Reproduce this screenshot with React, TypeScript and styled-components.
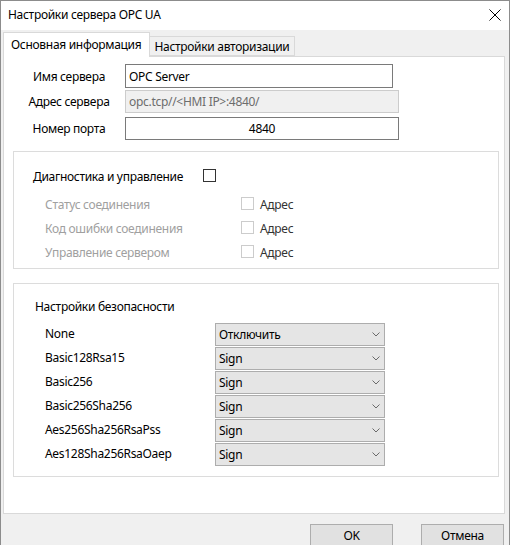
import React from "react";
import styled, { createGlobalStyle } from "styled-components";

const GlobalStyle = createGlobalStyle`
	html, body {
		margin: 0;
		padding: 0;
		background: #ffffff;
	}
	body {
		font-family: "Noto Sans", "Open Sans", "DejaVu Sans", sans-serif;
		font-size: 12px;
		letter-spacing: -0.3px;
		color: #000;
	}
`;

const diagRows = ["Статус соединения", "Код ошибки соединения", "Управление сервером"];

const securityRows = [
	{ name: "None", mode: "Отключить" },
	{ name: "Basic128Rsa15", mode: "Sign" },
	{ name: "Basic256", mode: "Sign" },
	{ name: "Basic256Sha256", mode: "Sign" },
	{ name: "Aes256Sha256RsaPss", mode: "Sign" },
	{ name: "Aes128Sha256RsaOaep", mode: "Sign" },
];

export default function App() {
	return (
		<>
			<GlobalStyle />
			<Window>
				<TitleBar>
					<Title>Настройки сервера OPC UA</Title>
					<CloseButton>
						<svg width="12" height="12" viewBox="0 0 12 12">
							<path d="M0.5 0.5 L11.5 11.5 M11.5 0.5 L0.5 11.5" stroke="#000" strokeWidth="1" />
						</svg>
					</CloseButton>
				</TitleBar>
				<Body>
					<TabStrip>
						<Tab $active>Основная информация</Tab>
						<Tab>Настройки авторизации</Tab>
					</TabStrip>
					<Panel>
						<FormRow>
							<FieldLabel>Имя сервера</FieldLabel>
							<TextBox $width={268} $height={24} readOnly value="OPC Server" />
						</FormRow>
						<FormRow $top={2}>
							<FieldLabel>Адрес сервера</FieldLabel>
							<TextBox $width={274} $height={23} $disabled readOnly value="opc.tcp//<HMI IP>:4840/" />
						</FormRow>
						<FormRow $top={4}>
							<FieldLabel>Номер порта</FieldLabel>
							<TextBox $width={274} $height={23} $center readOnly value="4840" />
						</FormRow>

						<Group $top={11} $height={118}>
							<GroupHeader $top={14} $pad={19}>
								<HeaderText $width={170}>Диагностика и управление</HeaderText>
								<CheckBox />
							</GroupHeader>
							<DiagList>
								{diagRows.map((label) => (
									<DiagRow key={label}>
										<DisabledText>{label}</DisabledText>
										<CheckBox $disabled />
										<AddrText>Адрес</AddrText>
									</DiagRow>
								))}
							</DiagList>
						</Group>

						<Group $top={14} $height={194}>
							<GroupHeader $top={12} $pad={21}>
								<HeaderText>Настройки безопасности</HeaderText>
							</GroupHeader>
							<SecurityList>
								{securityRows.map((row) => (
									<SecurityRow key={row.name}>
										<PolicyName>{row.name}</PolicyName>
										<Select>
											<span>{row.mode}</span>
											<svg width="8" height="5" viewBox="0 0 8 5">
												<path d="M0.5 0.5 L4 4 L7.5 0.5" stroke="#6a6a6a" strokeWidth="1" fill="none" />
											</svg>
										</Select>
									</SecurityRow>
								))}
							</SecurityList>
						</Group>
					</Panel>
					<Footer>
						<Button>OK</Button>
						<Button>Отмена</Button>
					</Footer>
				</Body>
			</Window>
		</>
	);
}

const Window = styled.div`
	width: 510px;
	height: 545px;
	box-sizing: border-box;
	border: 1px solid #8c8c8c;
	border-bottom: none;
	display: flex;
	flex-direction: column;
	overflow: hidden;
	background: #f0f0f0;
`;

const TitleBar = styled.div`
	height: 29px;
	flex-shrink: 0;
	background: #ffffff;
	display: flex;
	align-items: center;
	justify-content: space-between;
	padding: 0 8px 0 7px;
`;

const Title = styled.span`
	font-size: 12px;
	line-height: 16px;
	margin-top: -1px;
`;

const CloseButton = styled.div`
	width: 12px;
	height: 12px;
	display: flex;
	margin-top: -2px;
`;

const Body = styled.div`
	flex: 1;
	display: flex;
	flex-direction: column;
	padding: 2px 4px 0 2px;
`;

const TabStrip = styled.div`
	height: 24px;
	display: flex;
	align-items: flex-end;
	position: relative;
	z-index: 1;
`;

const Tab = styled.div<{ $active?: boolean }>`
	box-sizing: border-box;
	height: ${(p) => (p.$active ? 25 : 20)}px;
	margin-bottom: ${(p) => (p.$active ? -1 : 0)}px;
	padding: ${(p) => (p.$active ? "0 8px 2px 7px" : "0 5px 0 4px")};
	display: flex;
	align-items: center;
	border: 1px solid #d9d9d9;
	border-bottom: ${(p) => (p.$active ? "none" : "1px solid #d9d9d9")};
	border-left: ${(p) => (p.$active ? "1px solid #d9d9d9" : "none")};
	background: ${(p) => (p.$active ? "#ffffff" : "#f0f0f0")};
	white-space: nowrap;
`;

const Panel = styled.div`
	box-sizing: border-box;
	height: 458px;
	border: 1px solid #d9d9d9;
	background: #ffffff;
	padding-top: 7px;
`;

const FormRow = styled.div<{ $top?: number }>`
	display: flex;
	align-items: center;
	margin-top: ${(p) => p.$top ?? 0}px;
	padding-left: 11px;
`;

const FieldLabel = styled.div`
	width: 108px;
	margin-right: 2px;
	text-align: center;
	white-space: nowrap;
`;

const TextBox = styled.input<{ $width: number; $height: number; $disabled?: boolean; $center?: boolean }>`
	box-sizing: border-box;
	width: ${(p) => p.$width}px;
	height: ${(p) => p.$height}px;
	margin: 0;
	padding: 0 3px;
	font: inherit;
	letter-spacing: inherit;
	outline: none;
	text-align: ${(p) => (p.$center ? "center" : "left")};
	border: 1px solid ${(p) => (p.$disabled ? "#cccccc" : "#7a7a7a")};
	background: ${(p) => (p.$disabled ? "#f0f0f0" : "#ffffff")};
	color: ${(p) => (p.$disabled ? "#6d6d6d" : "#000000")};
`;

const Group = styled.div<{ $top: number; $height: number }>`
	box-sizing: border-box;
	height: ${(p) => p.$height}px;
	margin: ${(p) => p.$top}px 5px 0 9px;
	border: 1px solid #dcdcdc;
`;

const GroupHeader = styled.div<{ $top: number; $pad: number }>`
	display: flex;
	align-items: center;
	height: 20px;
	margin-top: ${(p) => p.$top}px;
	padding-left: ${(p) => p.$pad}px;
`;

const HeaderText = styled.div<{ $width?: number }>`
	width: ${(p) => (p.$width ? `${p.$width}px` : "auto")};
	white-space: nowrap;
`;

const CheckBox = styled.span<{ $disabled?: boolean }>`
	box-sizing: border-box;
	display: inline-block;
	width: 13px;
	height: 13px;
	background: #ffffff;
	border: 1px solid ${(p) => (p.$disabled ? "#cccccc" : "#333333")};
	margin-top: -2px;
`;

const DiagList = styled.div`
	margin-top: 6px;
	padding-left: 31px;
`;

const DiagRow = styled.div`
	display: grid;
	grid-template-columns: 196px 13px auto;
	align-items: center;
	height: 24px;
`;

const DisabledText = styled.span`
	color: #a0a0a0;
	white-space: nowrap;
`;

const AddrText = styled.span`
	color: #333333;
	margin-left: 6px;
`;

const SecurityList = styled.div`
	margin-top: 7px;
	padding-left: 31px;
	display: flex;
	flex-direction: column;
	gap: 1px;
`;

const SecurityRow = styled.div`
	display: grid;
	grid-template-columns: 170px 170px;
	align-items: center;
	height: 23px;
`;

const PolicyName = styled.span`
	white-space: nowrap;
	margin-top: -3px;
`;

const Select = styled.div`
	box-sizing: border-box;
	height: 23px;
	display: flex;
	align-items: center;
	justify-content: space-between;
	padding: 0 3px 0 3px;
	border: 1px solid #adadad;
	background: #e5e5e5;

	svg {
		margin-right: 1px;
	}
`;

const Footer = styled.div`
	display: flex;
	justify-content: flex-end;
	gap: 28px;
	margin-top: 10px;
	padding-right: 1px;
`;

const Button = styled.div`
	box-sizing: border-box;
	width: 83px;
	height: 23px;
	display: flex;
	align-items: center;
	justify-content: center;
	border: 1px solid #adadad;
	background: #e1e1e1;
`;
